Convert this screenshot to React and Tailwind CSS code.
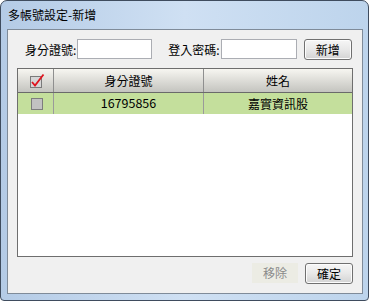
import React from 'react';

const font = { fontFamily: '"Noto Sans CJK TC", "Liberation Sans", sans-serif' };

const Win7Button = ({ children, className = '' }) => (
  <button
    className={`h-[21px] w-[48px] rounded-[3px] border border-[#707070] bg-gradient-to-b from-[#f6f6f6] via-[#e8e8e8] to-[#d3d3d3] text-[12px] leading-none text-black shadow-[inset_0_0_0_1px_#fcfcfc] ${className}`}
  >
    {children}
  </button>
);

const HeaderCheck = () => (
  <svg width="16" height="16" viewBox="0 0 16 16" className="block">
    <rect x="1.5" y="3.5" width="11" height="11" fill="#d6d6d6" stroke="#7a7a7a" />
    <path d="M3 9 L6 12.5 L14.5 1.5" fill="none" stroke="#e0141e" strokeWidth="1.8" />
  </svg>
);

const rows = [{ id: '16795856', name: '嘉實資訊股' }];

export default function App() {
  return (
    <div className="h-[301px] w-[369px] overflow-hidden bg-white" style={font}>
      <div className="flex h-full w-full flex-col rounded-t-[7px] rounded-b-[4px] border border-[#3f4c5e] bg-gradient-to-r from-[#b4cbe6] via-[#cfe0f3] to-[#bdd4ec]">
        <div className="flex h-[28px] shrink-0 items-center pl-[7px] text-[12px] text-black">
          多帳號設定-新增
        </div>
        <div className="mb-[6px] ml-[6px] mr-[5px] flex flex-1 flex-col border border-[#7f8b99] bg-[#f0f0f0] px-[9px] pb-[9px] pt-[9px]">
          <div className="flex h-[21px] items-start text-[12px] text-black">
            <span className="mt-[2px] pl-[8px]">身分證號:</span>
            <input className="ml-[1px] h-[20px] w-[75px] border border-[#abadb3] bg-white outline-none" />
            <span className="ml-[16px] mt-[2px]">登入密碼:</span>
            <input className="ml-[1px] h-[20px] w-[76px] border border-[#abadb3] bg-white outline-none" />
            <Win7Button className="ml-[7px]">新增</Win7Button>
          </div>

          <div className="mt-[8px] flex h-[189px] flex-col border border-[#6e6e6e] bg-white">
            <div className="grid h-[24px] grid-cols-[35px_150px_1fr] border-b border-[#6a6a6a] bg-gradient-to-b from-[#f7f6f1] to-[#c4c4bf] text-[12px] text-black">
              <div className="flex items-center justify-center pl-[2px]">
                <HeaderCheck />
              </div>
              <div className="flex items-center justify-center border-l border-[#8f8f8f]">身分證號</div>
              <div className="flex items-center justify-center border-l border-[#8f8f8f]">姓名</div>
            </div>
            {rows.map((r) => (
              <div
                key={r.id}
                className="grid h-[21px] grid-cols-[35px_150px_1fr] bg-[#c4df9c] text-[12px] text-black"
              >
                <div className="flex items-center justify-center pl-[2px]">
                  <div className="h-[12px] w-[12px] border border-[#7d7d7d] bg-[#c2c2c2]" />
                </div>
                <div className="flex items-center justify-center border-l border-[#9a9a9a] text-[12.5px]">{r.id}</div>
                <div className="flex items-center justify-center border-l border-[#9a9a9a]">{r.name}</div>
              </div>
            ))}
          </div>

          <div className="mt-[6px] flex justify-end gap-[7px]">
            <div className="flex h-[20px] w-[46px] items-center justify-center bg-[#ececE4] text-[12px] text-[#8a8a8a]">
              移除
            </div>
            <Win7Button>確定</Win7Button>
          </div>
        </div>
      </div>
    </div>
  );
}
